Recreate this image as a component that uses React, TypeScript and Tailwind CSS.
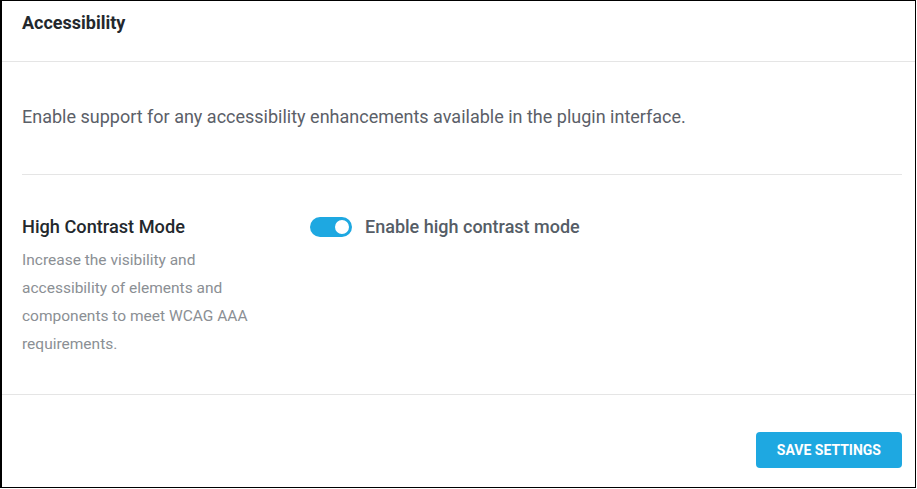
import { useState } from "react";

export default function App() {
  const [highContrast, setHighContrast] = useState(true);

  return (
    <div className="w-[916px] h-[488px] bg-white border-black border-t border-l-2 border-r border-b font-['Roboto','Liberation_Sans',sans-serif] flex flex-col">
      {/* Header */}
      <div className="h-[61px] border-b border-[#e5e5e5] pl-5 pt-[10px]">
        <h2 className="text-[18px] leading-6 font-bold text-[#23282d]">Accessibility</h2>
      </div>

      {/* Body */}
      <div className="pl-5 pr-[13px]">
        <p className="pt-[43px] pb-[45px] text-[18px] leading-6 text-[#5b6068] border-b border-[#e5e5e5]">
          Enable support for any accessibility enhancements available in the plugin interface.
        </p>

        <div className="flex pt-[40px] pb-[36px]">
          <div className="w-[288px] shrink-0">
            <h3 className="text-[18.2px] leading-6 font-medium text-[#23282d]">High Contrast Mode</h3>
            <p className="mt-[7px] w-[250px] text-[15.5px] leading-7 text-[#8b8f94]">
              Increase the visibility and accessibility of elements and components to meet WCAG AAA
              requirements.
            </p>
          </div>
          <label className="flex items-start gap-[13px] cursor-pointer">
            <button
              type="button"
              onClick={() => setHighContrast(!highContrast)}
              className={
                highContrast
                  ? "relative mt-[2px] w-[42px] h-5 rounded-full bg-[#1ea8e1]"
                  : "relative mt-[2px] w-[42px] h-5 rounded-full bg-[#c5c9cc]"
              }
            >
              <span
                className={
                  highContrast
                    ? "absolute top-[1px] right-[1px] w-[18px] h-[18px] rounded-full bg-white border-2 border-[#1ea8e1]"
                    : "absolute top-[1px] left-[1px] w-[18px] h-[18px] rounded-full bg-white border-2 border-[#c5c9cc]"
                }
              />
            </button>
            <span className="text-[18px] leading-6 font-medium text-[#555d66]">Enable high contrast mode</span>
          </label>
        </div>
      </div>

      {/* Footer */}
      <div className="flex-1 border-t border-[#e5e5e5] flex justify-end items-start pt-[37px] pr-[13px]">
        <button className="h-9 pt-[1px] px-[21px] rounded-[4px] bg-[#1ea8e1] text-white text-[14px] font-bold uppercase">
          Save Settings
        </button>
      </div>
    </div>
  );
}
